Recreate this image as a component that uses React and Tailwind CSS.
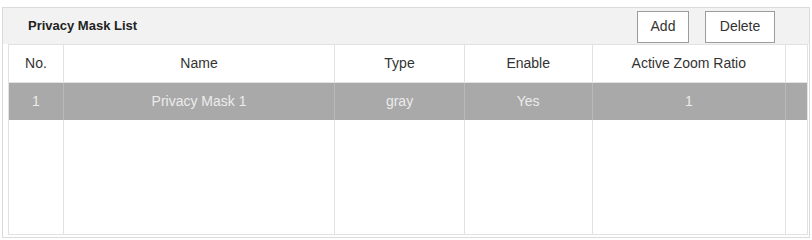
const columns = [
    { key: 'no', label: 'No.', width: 'w-[54px]' },
    { key: 'name', label: 'Name', width: 'w-[272px]' },
    { key: 'type', label: 'Type', width: 'w-[130px]' },
    { key: 'enable', label: 'Enable', width: 'w-[128px]' },
    { key: 'zoom', label: 'Active Zoom Ratio', width: 'w-[194px]' },
    { key: 'pad', label: '', width: 'w-[22px]' },
];

const masks = [
    { no: '1', name: 'Privacy Mask 1', type: 'gray', enable: 'Yes', zoom: '1', pad: '' },
];

const App = () => {
    return (
        <div className="w-[812px] h-[240px] bg-white pt-[7px] px-[2px] font-['Liberation_Sans',Arial,sans-serif]">
            <div className="h-[231px] border border-[#dadada] flex flex-col">
                {/* title bar */}
                <div className="h-[36px] bg-[#f2f2f2] flex items-center justify-between pl-[25px] pr-[34px]">
                    <span className="text-[13px] font-bold text-[#222]">Privacy Mask List</span>
                    <div className="flex gap-[16px] pt-[1px]">
                        <button className="h-[32px] w-[52px] bg-white border border-[#9c9c9c] text-[14px] text-[#333]">Add</button>
                        <button className="h-[32px] w-[70px] bg-white border border-[#9c9c9c] text-[14px] text-[#333]">Delete</button>
                    </div>
                </div>

                <div className="ml-[5px] mr-[1px] h-[191px] border border-[#e2e2e2] flex flex-col">
                    <div className="flex h-[38px] bg-white border-b border-[#e2e2e2]">
                        {columns.map((c, i) => (
                            <div key={c.key} className={`${c.width} flex items-center justify-center text-[14px] text-[#333] ${i > 0 ? 'border-l border-[#e2e2e2]' : ''}`}>
                                {c.label}
                            </div>
                        ))}
                    </div>
                    {masks.map(m => (
                        <div key={m.no} className="flex h-[37px] bg-[#a9a9a9]">
                            {columns.map((c, i) => (
                                <div key={c.key} className={`${c.width} flex items-center justify-center text-[14px] text-[#ececec] ${i > 0 ? 'border-l border-[#b9b9b9]' : ''}`}>
                                    {m[c.key]}
                                </div>
                            ))}
                        </div>
                    ))}
                    {/* empty rest of the list, column lines run down */}
                    <div className="flex flex-1">
                        {columns.map((c, i) => (
                            <div key={c.key} className={`${c.width} ${i > 0 ? 'border-l border-[#e2e2e2]' : ''}`}></div>
                        ))}
                    </div>
                </div>
            </div>
        </div>
    );
};

export default App;
